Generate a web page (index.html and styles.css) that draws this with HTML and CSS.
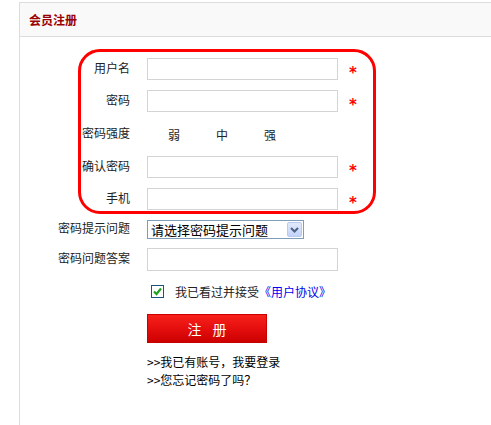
FILE: index.html
```html
<!DOCTYPE html>
<html lang="zh-CN">
<head>
  <meta charset="UTF-8" />
  <meta name="viewport" content="width=device-width, initial-scale=1" />
  <title>会员注册</title>
  <link rel="stylesheet" href="styles.css">
</head>
<body>
  <div class="panel">
    <div class="panel-head">
      <h2>会员注册</h2>
    </div>

    <form class="reg">
      <!-- required fields, circled in red -->
      <div class="required-group">
        <div class="row">
          <label>用户名</label>
          <input class="text" type="text" />
          <span class="star">*</span>
        </div>
        <div class="row">
          <label>密码</label>
          <input class="text" type="password" />
          <span class="star">*</span>
        </div>
        <div class="row strength">
          <label>密码强度</label>
          <div class="levels">
            <span>弱</span>
            <span>中</span>
            <span>强</span>
          </div>
        </div>
        <div class="row">
          <label>确认密码</label>
          <input class="text" type="password" />
          <span class="star">*</span>
        </div>
        <div class="row">
          <label>手机</label>
          <input class="text" type="text" />
          <span class="star">*</span>
        </div>
      </div>

      <div class="row select-row">
        <label>密码提示问题</label>
        <div class="fake-select">
          <span class="fake-select-text">请选择密码提示问题</span>
          <span class="fake-select-arrow">
            <svg width="9" height="6" viewBox="0 0 9 6"><path d="M1 1 L4.5 4.5 L8 1" fill="none" stroke="#4d6185" stroke-width="2"/></svg>
          </span>
        </div>
      </div>

      <div class="row answer-row">
        <label>密码问题答案</label>
        <input class="text" type="text" />
      </div>

      <div class="agree">
        <span class="check">
          <svg width="11" height="11" viewBox="0 0 11 11"><path d="M2 5.5 L4.5 8 L9 2.5" fill="none" stroke="#21a121" stroke-width="2.2"/></svg>
        </span>
        <span>我已看过并接受<a href="#">《用户协议》</a></span>
      </div>

      <button class="submit" type="button">注 册</button>

      <ul class="links">
        <li><a href="#">&gt;&gt;我已有账号，我要登录</a></li>
        <li><a href="#">&gt;&gt;您忘记密码了吗？</a></li>
      </ul>
    </form>
  </div>
</body>
</html>
```

FILE: styles.css
```css
* {
  box-sizing: border-box;
  margin: 0;
  padding: 0;
}
body {
  font-family: "Noto Sans CJK SC", sans-serif;
  font-size: 12px;
  color: #222;
  background-color: #fff;
  overflow: hidden;
}
.panel {
  margin: 2px 0 0 19px;
  min-height: 430px;
  border: 1px solid #ddd;
  border-right: none;
}
.panel-head {
  height: 34px;
  background-color: #f9f9f9;
  border-bottom: 1px solid #ddd;
  padding-left: 9px;
}
.panel-head h2 {
  font-size: 12px;
  line-height: 33px;
  color: #990000;
  font-weight: bold;
}
.reg {
  padding-top: 12px;
}
.required-group {
  margin-left: 58px;
  width: 298px;
  height: 165px;
  border: 3px solid #f00;
  border-radius: 22px;
  padding: 6px 0 1px;
}
.row {
  display: flex;
  align-items: center;
  height: 22px;
  margin-bottom: 10px;
}
.row label {
  width: 110px;
  margin-right: 17px;
  text-align: right;
  padding-bottom: 4px;
}
.required-group .row label {
  width: 49px;
}
.required-group .row:last-child {
  margin-bottom: 0;
}
.text {
  width: 191px;
  height: 22px;
  border: 1px solid #d4d4d4;
  background-color: #fff;
}
.star {
  color: #f00;
  margin-left: 11px;
  padding-top: 7px;
  font-family: "DejaVu Sans", sans-serif;
  font-size: 15px;
  font-weight: bold;
}
.strength {
  height: 24px;
}
.levels {
  display: flex;
  padding-left: 3px;
}
.levels span {
  width: 48px;
  text-align: center;
}
.select-row {
  margin-top: 6px;
  height: 19px;
  margin-bottom: 9px;
}
.fake-select {
  width: 157px;
  height: 19px;
  border: 1px solid #7f9db9;
  display: flex;
  align-items: center;
  justify-content: space-between;
  padding: 0 1px 0 3px;
}
.fake-select-text {
  font-size: 13px;
  color: #000;
}
.fake-select-arrow {
  width: 15px;
  height: 15px;
  border: 1px solid #b9c9ef;
  border-radius: 2px;
  background: linear-gradient(#e1e9fc, #c3d3fb);
  display: flex;
  align-items: center;
  justify-content: center;
}
.answer-row {
  height: 23px;
  margin-bottom: 0;
}
.answer-row .text {
  height: 23px;
}
.agree {
  display: flex;
  align-items: center;
  height: 18px;
  margin: 11px 0 0 131px;
}
.check {
  width: 13px;
  height: 13px;
  border: 1px solid #1c5180;
  background-color: #fff;
  margin-right: 11px;
  display: flex;
  align-items: center;
  justify-content: center;
}
.agree a {
  color: #0000ee;
  text-decoration: none;
}
.submit {
  display: block;
  margin: 14px 0 0 127px;
  width: 120px;
  height: 29px;
  border: 1px solid #c80000;
  background: linear-gradient(#f8201a, #e00c0c 60%, #cc0000);
  color: #fff;
  font-family: inherit;
  font-size: 14px;
  letter-spacing: 4px;
  padding-left: 4px;
  cursor: pointer;
}
.links {
  list-style: none;
  margin: 10px 0 0 127px;
}
.links li {
  line-height: 18px;
}
.links a {
  color: #000;
  text-decoration: none;
}
```
